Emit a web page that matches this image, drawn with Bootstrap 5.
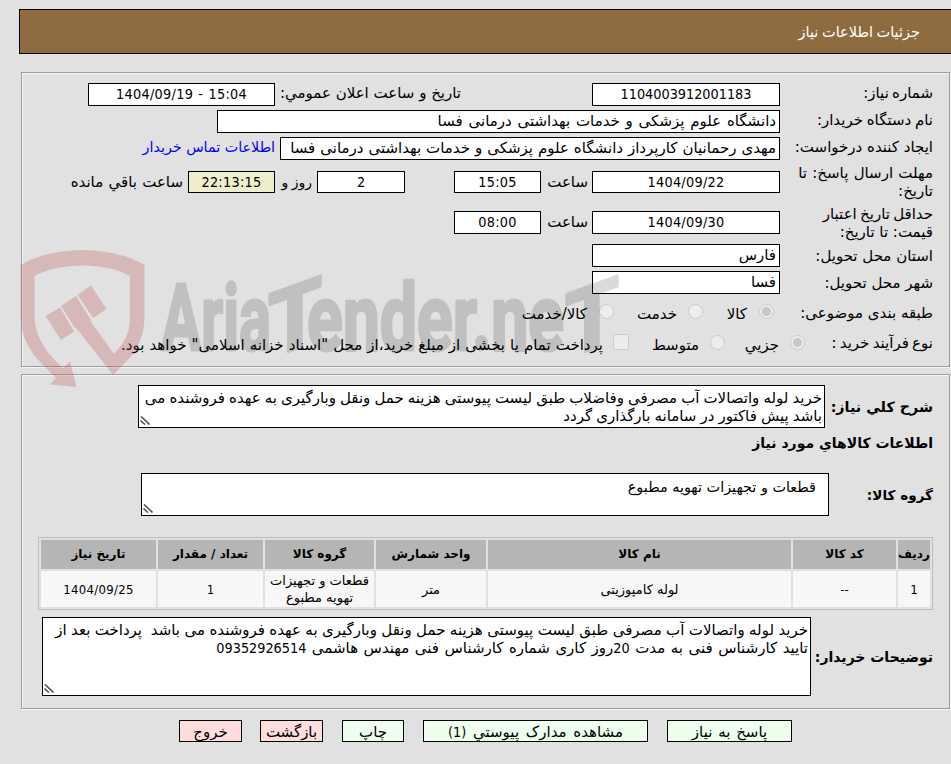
<!DOCTYPE html>
<html lang="fa" dir="rtl">
<head>
<meta charset="utf-8">
<meta name="viewport" content="width=device-width, initial-scale=1">
<title>جزئیات اطلاعات نیاز</title>
<link rel="stylesheet" href="https://cdn.jsdelivr.net/npm/bootstrap@5.3.0/dist/css/bootstrap.min.css">
<style>
body{background:#e1e1e1;color:#000;font-family:"DejaVu Sans",Tahoma,sans-serif;font-size:15px;line-height:18px;width:951px;height:764px;overflow:hidden;position:relative}
.num{font-family:"DejaVu Sans Condensed","DejaVu Sans",sans-serif;font-size:14.3px}
.date{letter-spacing:.3px}
.titlebar{margin:9px 0 0;width:932px;height:45px;background:#8f6c3f;border:1px solid #000;border-right:0;color:#fff;padding-right:31px;font-size:14.5px;word-spacing:-1px}
.panel{width:929px;margin-right:1px;border:1px solid #9c9c9c;box-shadow:inset 1px 1px #f5f5f5,1px 1px #f5f5f5;padding-right:16px}
.panel-a{margin-top:18px;height:295px;padding-top:8px}
.panel-b{margin-top:7px;height:335px;padding-top:10px}
.line{height:27px;white-space:nowrap}
.line-tall{height:40px}
.line-opts{height:31px}
.lbl{width:153px}
.tight{word-spacing:-1.5px}
.fld{background:#fff;border:1px solid #000;height:23px;padding:0 3px;line-height:21px}
.fld-s{height:22px;line-height:20px}
.w188{width:188px}.w187{width:187px}.w563{width:563px}.w500{width:500px}.w87{width:87px}.w88{width:88px}
.fld-clock{background:#eeeecc}
.hour{width:51px;padding-right:4px}
.buyer-link{color:#00f;margin-right:5px;font-size:14.3px}
.tx{position:relative;background:#fff;border:1px solid #000;padding:3px 2px;white-space:nowrap;overflow:hidden}
.grip{position:absolute;left:1px;bottom:2px}
.dot,.box{flex:none;width:15px;height:15px;border:1px solid #cbcbcb;background:#ededed;border-radius:50%;margin-bottom:1px}
.box{border-radius:2.5px;width:16px;height:16px}
.dot-on{background:radial-gradient(circle,#c8c8c8 4.2px,#ededed 4.9px)}
.opt{padding-top:4px}
.hd{font-weight:700;font-size:14px}
.items{width:895px;border:1px solid #bdbdbd;border-collapse:separate;border-spacing:2px;table-layout:fixed;font-size:13px;line-height:17px;text-align:center}
.items th{background:#b5b5b5;height:29px;padding:0;font-size:12px;white-space:nowrap}
.items td{background:#f7f7f7;height:36px;padding:0}
.items .num{font-size:13px}
.act{height:22px;border:1px solid #000;background:#eeffee;text-align:center;line-height:22px;white-space:nowrap}
.act-red{background:#ffdddd}
.mark-layer{position:absolute;left:0;top:0;pointer-events:none}
</style>
</head>
<body>
<header class="titlebar d-flex align-items-center">جزئیات اطلاعات نیاز</header>

<section class="panel panel-a">
  <div class="line d-flex align-items-center">
    <div class="lbl pb-1 tight">شماره نیاز:</div>
    <div class="fld w188 num text-center">1104003912001183</div>
    <div class="pb-1" style="margin-right:131px;width:186px">تاریخ و ساعت اعلان عمومي:</div>
    <div class="fld w187 num date text-center" dir="ltr" style="word-spacing:.8px">1404/09/19 - 15:04</div>
  </div>
  <div class="line d-flex align-items-center">
    <div class="lbl pb-1" style="word-spacing:-1px">نام دستگاه خریدار:</div>
    <div class="fld w563" style="word-spacing:1px">دانشگاه علوم پزشکی و خدمات بهداشتی درمانی فسا</div>
  </div>
  <div class="line d-flex align-items-center">
    <div class="lbl pb-1">ایجاد کننده درخواست:</div>
    <div class="fld w500" style="word-spacing:.2px">مهدی رحمانیان کارپرداز دانشگاه علوم پزشکی و خدمات بهداشتی درمانی فسا</div>
    <a href="#" class="buyer-link text-decoration-none pb-1">اطلاعات تماس خریدار</a>
  </div>
  <div class="line line-tall d-flex align-items-center">
    <div class="lbl"><span style="word-spacing:.5px">مهلت ارسال پاسخ: تا</span><br>تاریخ:</div>
    <div class="fld fld-s w188 num date text-center">1404/09/22</div>
    <div class="hour">ساعت</div>
    <div class="fld fld-s w87 num date text-center">15:05</div>
    <div class="fld fld-s w88 num text-center" style="margin-right:49px">2</div>
    <div style="width:42px;padding-right:5px;font-size:14px;word-spacing:-1px">روز و</div>
    <div class="fld fld-s fld-clock w87 num date text-center">22:13:15</div>
    <div style="padding-right:5px;word-spacing:.5px">ساعت باقي مانده</div>
  </div>
  <div class="line line-tall d-flex align-items-center">
    <div class="lbl" style="padding-top:2px"><span class="tight">حداقل تاریخ اعتبار</span><br>قیمت: تا تاریخ:</div>
    <div class="fld w188 num date text-center">1404/09/30</div>
    <div class="hour">ساعت</div>
    <div class="fld w87 num date text-center">08:00</div>
  </div>
  <div class="line d-flex align-items-center">
    <div class="lbl">استان محل تحویل:</div>
    <div class="fld w188">فارس</div>
  </div>
  <div class="line d-flex align-items-center">
    <div class="lbl">شهر محل تحویل:</div>
    <div class="fld w188">فسا</div>
  </div>
  <div class="line line-opts d-flex align-items-center">
    <div class="lbl" style="width:159px;padding-top:2px">طبقه بندی موضوعی:</div>
    <span class="dot dot-on"></span><span class="opt" style="width:56px;padding-right:12px">کالا</span>
    <span class="dot"></span><span class="opt" style="width:74px;padding-right:11px">خدمت</span>
    <span class="dot"></span><span class="opt" style="padding-right:12px">کالا/خدمت</span>
  </div>
  <div class="line line-opts d-flex align-items-center">
    <div class="lbl tight" style="width:128px">نوع فرآیند خرید :</div>
    <span class="dot dot-on"></span><span class="opt" style="width:65px;padding-right:11px">جزیي</span>
    <span class="dot"></span><span class="opt" style="width:81px;padding-right:11px">متوسط</span>
    <span class="box"></span><span class="opt" style="padding-right:10px;word-spacing:.3px">پرداخت تمام یا بخشی از مبلغ خرید،از محل "اسناد خزانه اسلامی" خواهد بود.</span>
  </div>
</section>

<section class="panel panel-b">
  <div class="d-flex align-items-center">
    <div class="hd" style="width:108px;font-size:14.3px">شرح کلي نیاز:</div>
    <div class="tx" style="width:687px;height:43px;word-spacing:-.7px">خرید لوله واتصالات آب مصرفی وفاضلاب طبق لیست پیوستی هزینه حمل ونقل وبارگیری به عهده فروشنده می<br>باشد پیش فاکتور در سامانه بارگذاری گردد
      <svg class="grip" width="10" height="9"><path d="M1 .5 9.500 8.500M.500 4.500 5 8.500" stroke="#555" stroke-width="1.600" fill="none"/></svg></div>
  </div>
  <h2 class="hd m-0" style="line-height:18px;padding-top:6px;height:45px">اطلاعات کالاهاي مورد نیاز</h2>
  <div class="d-flex align-items-center">
    <div class="hd" style="width:104px;font-size:13.6px">گروه کالا:</div>
    <div class="tx" style="width:688px;height:43px;padding-right:12px;padding-top:4px;font-size:14.4px">قطعات و تجهیزات تهویه مطبوع
      <svg class="grip" width="10" height="9"><path d="M1 .5 9.500 8.500M.500 4.500 5 8.500" stroke="#555" stroke-width="1.600" fill="none"/></svg></div>
  </div>
  <table class="items" style="margin-top:21px">
    <colgroup><col style="width:32px"><col style="width:103px"><col style="width:303px"><col style="width:110px"><col style="width:109px"><col style="width:105px"><col></colgroup>
    <thead><tr><th>ردیف</th><th>کد کالا</th><th>نام کالا</th><th>واحد شمارش</th><th>گروه کالا</th><th>تعداد / مقدار</th><th>تاریخ نیاز</th></tr></thead>
    <tbody><tr><td class="num">1</td><td class="num">--</td><td>لوله کامپوزیتی</td><td>متر</td><td>قطعات و تجهیزات<br>تهویه مطبوع</td><td class="num">1</td><td class="num date">1404/09/25</td></tr></tbody>
  </table>
  <div class="d-flex align-items-center" style="margin-top:7px">
    <div class="hd" style="width:122px">توضیحات خریدار:</div>
    <div class="tx" style="width:769px;height:79px;word-spacing:-.35px">خرید لوله واتصالات آب مصرفی طبق لیست پیوستی هزینه حمل ونقل وبارگیری به عهده فروشنده می باشد&nbsp; پرداخت بعد از<br><span style="word-spacing:.75px">تایید کارشناس فنی به مدت <span class="num">20</span>روز کاری شماره کارشناس فنی مهندس هاشمی <span class="num">09352926514</span></span>
      <svg class="grip" width="10" height="9"><path d="M1 .5 9.500 8.500M.500 4.500 5 8.500" stroke="#555" stroke-width="1.600" fill="none"/></svg></div>
  </div>
</section>

<footer class="d-flex" style="margin-top:11px;padding-right:159px">
  <div class="act" style="width:125px;word-spacing:1px">پاسخ به نیاز</div>
  <div class="act" style="width:225px;margin-right:19px;word-spacing:2px">مشاهده مدارک پیوستي <span class="num">(1)</span></div>
  <div class="act" style="width:62px;margin-right:19px">چاپ</div>
  <div class="act act-red" style="width:63px;margin-right:19px">بازگشت</div>
  <div class="act act-red" style="width:63px;margin-right:18px">خروج</div>
</footer>

<svg class="mark-layer" width="951" height="764" direction="ltr">
  <g fill="#be5050" fill-opacity=".28">
    <path fill-rule="evenodd" d="M20.500 265C55 245 110 245 144.500 265V315C144.500 342 134 355 113 375L77 329L75 328L61 306L76 296L91 320V322L114 354C124 343 130 334 130 317V276C105 262 60 262 34.500 276V315C34.500 338 48 354 63 368L70 361.500L76.500 387L50 384.500L56 378C38 360 21 346 20.500 315Z"/>
    <path d="M45.500 316 60 307.500 74 331.500 61 340ZM77.500 295 91 285.500 106.500 309 93 318Z"/>
  </g>
  <g opacity=".14" fill="#000" stroke="#000" stroke-width="3" stroke-linejoin="round" font-family="Roboto, sans-serif" font-weight="700" font-size="93">
    <text x="161" y="350" textLength="110" lengthAdjust="spacingAndGlyphs">Aria</text>
    <text transform="translate(268 359) skewY(-20)" font-size="90" textLength="54" lengthAdjust="spacingAndGlyphs">T</text>
    <text x="307" y="350" textLength="257" lengthAdjust="spacingAndGlyphs">ender.ne</text>
    <text transform="translate(565 359) skewY(-20)" font-size="90" textLength="54" lengthAdjust="spacingAndGlyphs">T</text>
  </g>
</svg>
<script src="https://cdn.jsdelivr.net/npm/bootstrap@5.3.0/dist/js/bootstrap.bundle.min.js"></script>
</body>
</html>
